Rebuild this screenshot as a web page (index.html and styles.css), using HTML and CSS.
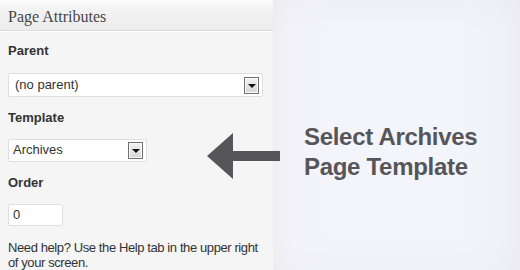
FILE: index.html
```html
<!DOCTYPE html>
<html>
<head>
<meta charset="utf-8">
<link rel="stylesheet" href="styles.css">
</head>
<body>
<div class="page">
  <div class="panel">
    <div class="panel-head">Page Attributes</div>
    <div class="panel-body">
      <div class="label label-parent">Parent</div>
      <div class="select select-wide"><span class="select-text">(no parent)</span><span class="select-btn"><span class="tri"></span></span></div>
      <div class="label">Template</div>
      <div class="select select-short"><span class="select-text">Archives</span><span class="select-btn"><span class="tri"></span></span></div>
      <div class="label">Order</div>
      <div class="input">0</div>
      <p class="help">Need help? Use the Help tab in the upper right<br>of your screen.</p>
    </div>
  </div>
  <div class="promo">
    <div class="promo-text">Select Archives<br>Page Template</div>
  </div>
  <svg class="arrow" width="80" height="50" viewBox="0 0 80 50">
    <polygon points="0,23 26,0 26,18 73,18 73,28 26,28 26,46" fill="#56565a"/>
  </svg>
</div>
</body>
</html>
```
FILE: styles.css
```css
html, body {
  margin: 0;
  padding: 0;
}
body {
  width: 520px;
  height: 270px;
  overflow: hidden;
  font-family: "Liberation Sans", Arial, sans-serif;
}
.page {
  position: relative;
  display: flex;
  width: 520px;
  height: 270px;
}
.panel {
  width: 273px;
  flex: none;
  background: #f5f5f5;
}
.panel-head {
  height: 27px;
  padding: 3px 0 0 8px;
  line-height: 27px;
  font-family: "Liberation Serif", Georgia, serif;
  font-size: 16px;
  color: #464646;
  background: linear-gradient(to bottom, #fbfbfb 0%, #f3f3f3 30%, #ececec 100%);
  border-bottom: 1px solid #dddddd;
  box-shadow: 0 1px 0 #ffffff;
}
.panel-body {
  padding: 0 2px 0 8px;
}
.label {
  font-size: 13px;
  line-height: 16px;
  font-weight: bold;
  color: #333333;
  margin-top: 13px;
  margin-bottom: 13px;
}
.label-parent {
  margin-top: 12px;
  margin-bottom: 14px;
}
.select {
  display: flex;
  align-items: center;
  box-sizing: border-box;
  background: #ffffff;
  border: 1px solid #dfdfdf;
  border-radius: 2px;
  padding: 0 3px 0 6px;
}
.select-wide {
  width: 255px;
  height: 24px;
}
.select-short {
  width: 139px;
  height: 23px;
  padding-left: 4px;
}
.select-text {
  flex: 1;
  font-size: 13px;
  color: #333333;
  line-height: 16px;
  padding-bottom: 1px;
}
.select-btn {
  box-sizing: border-box;
  width: 15px;
  height: 17px;
  border: 1px solid #707070;
  background: linear-gradient(to bottom, #f4f4f4 0%, #e2e2e2 60%, #d4d4d4 100%);
  box-shadow: inset 0 0 0 1px #fafafa;
  display: flex;
  align-items: center;
  justify-content: center;
}
.tri {
  width: 0;
  height: 0;
  border-left: 4px solid transparent;
  border-right: 4px solid transparent;
  border-top: 4px solid #111111;
  margin-top: 1px;
}
.input {
  box-sizing: border-box;
  width: 55px;
  height: 22px;
  background: #ffffff;
  border: 1px solid #dfdfdf;
  border-radius: 2px;
  font-size: 13px;
  line-height: 19px;
  padding-left: 4px;
  color: #333333;
}
.help {
  margin: 14px 0 0 0;
  font-size: 13px;
  line-height: 15px;
  color: #333333;
  letter-spacing: -0.4px;
  white-space: nowrap;
}
.promo {
  flex: 1;
  background:
    linear-gradient(to bottom, rgba(232,232,238,0.4) 0%, rgba(240,240,247,0) 12%, rgba(240,240,247,0) 88%, rgba(232,232,238,0.3) 100%),
    linear-gradient(to right, #eeeef4 0%, #f3f3f9 8%, #f4f4fb 30%, #f4f4fb 75%, #f1f1f8 92%, #ececf1 100%);
  padding: 122px 0 0 31px;
}
.promo-text {
  font-size: 24px;
  line-height: 30px;
  font-weight: bold;
  letter-spacing: -0.3px;
  color: #56565a;
}
.arrow {
  position: absolute;
  left: 207px;
  top: 133px;
}
```
